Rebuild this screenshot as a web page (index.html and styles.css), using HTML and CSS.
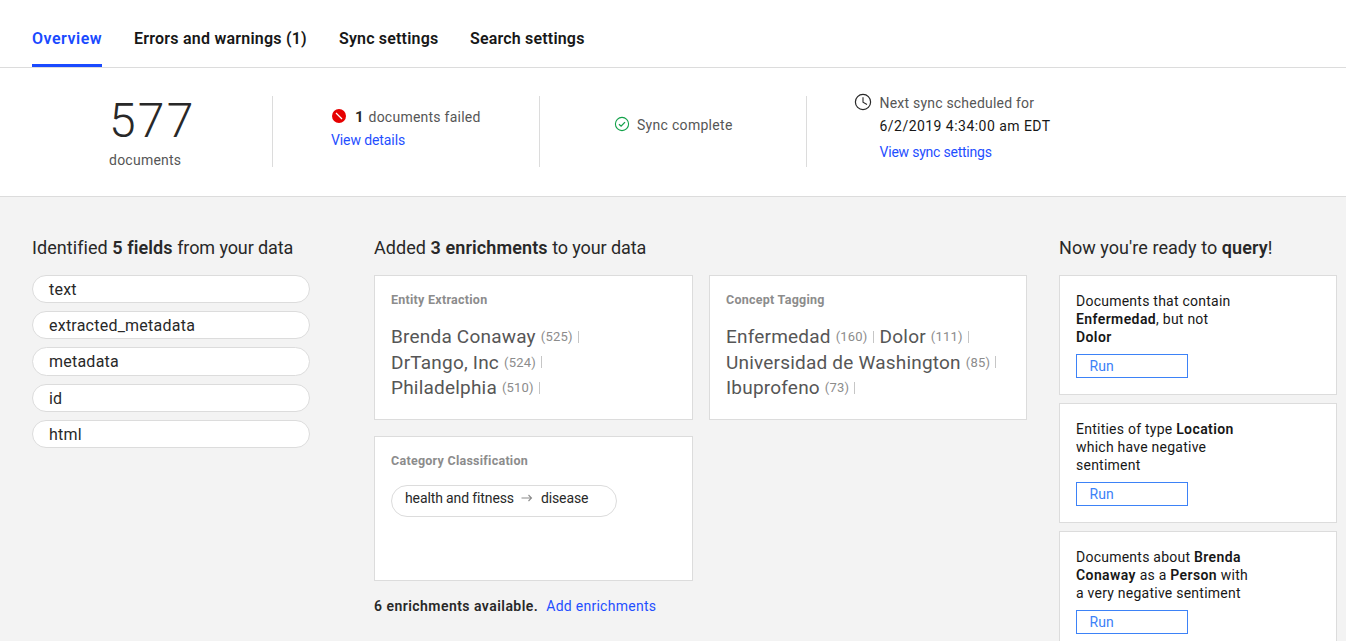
FILE: index.html
```
<!DOCTYPE html>
<html lang="en">
<head>
<meta charset="utf-8">
<title>Overview</title>
<link rel="stylesheet" href="styles.css">
</head>
<body>
<nav class="tabs">
  <a class="tab tab-active">Overview</a>
  <a class="tab tab-errors">Errors and warnings (1)</a>
  <a class="tab tab-sync">Sync settings</a>
  <a class="tab tab-search">Search settings</a>
</nav>
<section class="stats">
  <div class="stat stat-count">
    <div class="count">577</div>
    <div class="count-label">documents</div>
  </div>
  <div class="stat stat-failed">
    <div class="failed-line">
      <svg class="icon-failed" width="14" height="14" viewBox="0 0 14 14"><circle cx="7" cy="7" r="7" fill="#e60000"/><path d="M4 4l6 6" stroke="#fff" stroke-width="1.3"/></svg>
      <b>1</b><span>documents failed</span>
    </div>
    <a class="link">View details</a>
  </div>
  <div class="stat stat-complete">
    <svg width="16" height="16" viewBox="0 0 16 16" fill="none" stroke="#12a149"><circle cx="8" cy="8" r="6.6" stroke-width="1.1"/><path d="M5 8.2l2.1 2L11 6.1" stroke-width="1.3"/></svg>
    <span>Sync complete</span>
  </div>
  <div class="stat stat-next">
    <svg width="18" height="18" viewBox="0 0 18 18" fill="none" stroke="#282828"><circle cx="9" cy="9" r="7.6" stroke-width="1.2"/><path d="M9 4.2V9.2L13 11.4" stroke-width="1.1"/></svg>
    <div class="next-text">
      <div class="next-label">Next sync scheduled for</div>
      <div class="next-date">6/2/2019 4:34:00 am EDT</div>
      <a class="link">View sync settings</a>
    </div>
  </div>
</section>
<main class="content">
  <section class="fields">
    <h2>Identified <b>5 fields</b> <span class="tight">from your data</span></h2>
    <ul class="field-list">
      <li>text</li><li>extracted_metadata</li><li>metadata</li><li>id</li><li>html</li>
    </ul>
  </section>
  <section class="enrichments">
    <h2>Added <b>3 enrichments</b> <span class="tight">to your data</span></h2>
    <div class="cards">
      <article class="card">
        <h3>Entity Extraction</h3>
        <div class="terms">
          <span class="term">Brenda Conaway<small>(525)</small><i></i></span>
          <span class="term">DrTango, Inc<small>(524)</small><i></i></span>
          <span class="term">Philadelphia<small>(510)</small><i></i></span>
        </div>
      </article>
      <article class="card">
        <h3>Concept Tagging</h3>
        <div class="terms terms-wide">
          <span class="term">Enfermedad<small>(160)</small><i></i></span>
          <span class="term">Dolor<small>(111)</small><i></i></span>
          <span class="term">Universidad de Washington<small>(85)</small><i></i></span>
          <span class="term">Ibuprofeno<small>(73)</small><i></i></span>
        </div>
      </article>
      <article class="card">
        <h3>Category Classification</h3>
        <div class="category">
          <span>health and fitness</span>
          <svg width="12" height="8" viewBox="0 0 12 8" fill="none" stroke="#8c8c8c" stroke-width="1.1"><path d="M.5 4h10M7.500 1L10.500 4 7.500 7"/></svg>
          <span>disease</span>
        </div>
      </article>
    </div>
    <p class="available"><b>6 enrichments available.</b><a class="link">Add enrichments</a></p>
  </section>
  <section class="queries">
    <h2>Now you're ready to <b>query</b>!</h2>
    <article class="query">
      <p>Documents that contain<br><b>Enfermedad</b>, but not<br><b>Dolor</b></p>
      <button>Run</button>
    </article>
    <article class="query">
      <p>Entities of type <b>Location</b><br>which have negative<br>sentiment</p>
      <button>Run</button>
    </article>
    <article class="query">
      <p>Documents about <b>Brenda</b><br><b>Conaway</b> as a <b>Person</b> with<br>a very negative sentiment</p>
      <button>Run</button>
    </article>
  </section>
</main>
</body>
</html>
```
FILE: styles.css
```
* { box-sizing: border-box; }
body {
  margin: 0;
  height: 641px;
  overflow: hidden;
  display: flex;
  flex-direction: column;
  background: #fff;
  color: #282828;
  font: 14px/18px Roboto, "Liberation Sans", sans-serif;
  letter-spacing: .24px;
}
h2, h3, p, ul { margin: 0; padding: 0; }
b { font-weight: 600; }
svg { flex: none; }
a, span, h2, h3 { white-space: nowrap; }

.tabs {
  flex: none;
  display: flex;
  gap: 32px;
  height: 68px;
  padding-left: 32px;
  border-bottom: 1px solid #dcdcdc;
}
.tab {
  padding-top: 30px;
  font-size: 16px;
  font-weight: 600;
  color: #171717;
  letter-spacing: .18px;
}
.tab-active {
  width: 70px;
  color: #1a4aff;
  border-bottom: 3px solid #1a4aff;
  letter-spacing: .5px;
}
.tab-errors { width: 173px; letter-spacing: .23px; }
.tab-sync { width: 99px; }

.stats {
  flex: none;
  display: grid;
  grid-template-columns: 273px 267px 267px 1fr;
  height: 129px;
  padding-top: 28px;
  border-bottom: 1px solid #dcdcdc;
  color: #565656;
}
.stat { height: 71px; border-right: 1px solid #dcdcdc; }
.stat-next { border-right: 0; }
.count {
  padding-left: 109px;
  font-size: 48px;
  line-height: 50px;
  font-weight: 300;
  letter-spacing: 2.2px;
  color: #282828;
}
.count-label { padding: 5px 0 0 109px; }
.stat-failed { padding: 12px 0 0 58px; }
.failed-line { display: flex; align-items: center; height: 18px; }
.icon-failed { position: relative; top: -1px; margin: 0 9px 0 1px; }
.failed-line b { width: 13.500px; font-weight: 700; font-size: 15px; color: #282828; }
.link { color: #1f4fff; letter-spacing: -.15px; }
.stat-failed .link { display: block; margin-top: 5px; letter-spacing: -.1px; }
.stat-complete { display: flex; padding: 20px 0 0 74px; gap: 7px; letter-spacing: .3px; }
.stat-next { display: flex; padding-left: 47px; gap: 7.500px; }
.stat-next svg { margin-top: -3px; }
.next-text { margin-top: -2px; }
.next-label { letter-spacing: .21px; }
.next-date { margin: 5px 0 8px; color: #171717; letter-spacing: .46px; }
.next-text .link { letter-spacing: -.22px; }

.content {
  flex: 1;
  display: grid;
  grid-template-columns: 278px 653px 278px;
  column-gap: 64px;
  padding: 39px 0 0 32px;
  background: #f3f3f3;
}
.queries { width: 278px; margin-left: -32px; }
h2 { margin-bottom: 16px; font-size: 18px; line-height: 23px; font-weight: 400; letter-spacing: .06px; }
h2 b { letter-spacing: .1px; }
.tight { letter-spacing: -.1px; }
.field-list { display: grid; gap: 8px; list-style: none; }
.field-list li {
  height: 28.2px;
  padding-left: 16px;
  border: 1px solid #dcdcdc;
  border-radius: 15px;
  background: #fff;
  font-size: 16px;
  line-height: 27px;
  letter-spacing: .23px;
}
.cards { display: grid; grid-template-columns: 319px 318px; gap: 16px; }
.card { height: 145px; padding: 16px; background: #fff; border: 1px solid #dcdcdc; }
h3 { font-size: 12.500px; line-height: 16px; font-weight: 700; color: #8c8c8c; letter-spacing: .26px; }
.terms { margin-top: 16px; display: flex; flex-wrap: wrap; column-gap: 6px; color: #565656; }
.terms:not(.terms-wide) { flex-direction: column; }
.term { height: 25.500px; display: flex; align-items: center; font-size: 19px; line-height: 25px; letter-spacing: .2px; }
.term small { margin-left: 5px; font-size: 13px; color: #8c8c8c; }
.term i { width: 1px; height: 12px; margin-left: 5px; background: #c6c6c6; }
.category {
  display: flex;
  align-items: center;
  gap: 7.500px;
  width: 226px;
  height: 32px;
  margin-top: 16px;
  padding: 0 0 6px 13px;
  border: 1px solid #dcdcdc;
  border-radius: 16px;
  letter-spacing: -.12px;
}
.available { margin-top: 16px; display: flex; gap: 8px; letter-spacing: .46px; }
.available .link { letter-spacing: .27px; }
.query {
  height: 120px;
  margin-bottom: 8px;
  padding: 16px;
  background: #fff;
  border: 1px solid #dcdcdc;
  color: #171717;
}
.query b { letter-spacing: .4px; }
button {
  display: block;
  width: 112px;
  height: 24px;
  margin-top: 8px;
  padding: 0 0 0 12.500px;
  border: 1px solid #3d82f7;
  border-radius: 0;
  background: #fff;
  color: #3d82f7;
  font: 14px/22px Roboto, sans-serif;
  letter-spacing: .14px;
  text-align: left;
}
```
